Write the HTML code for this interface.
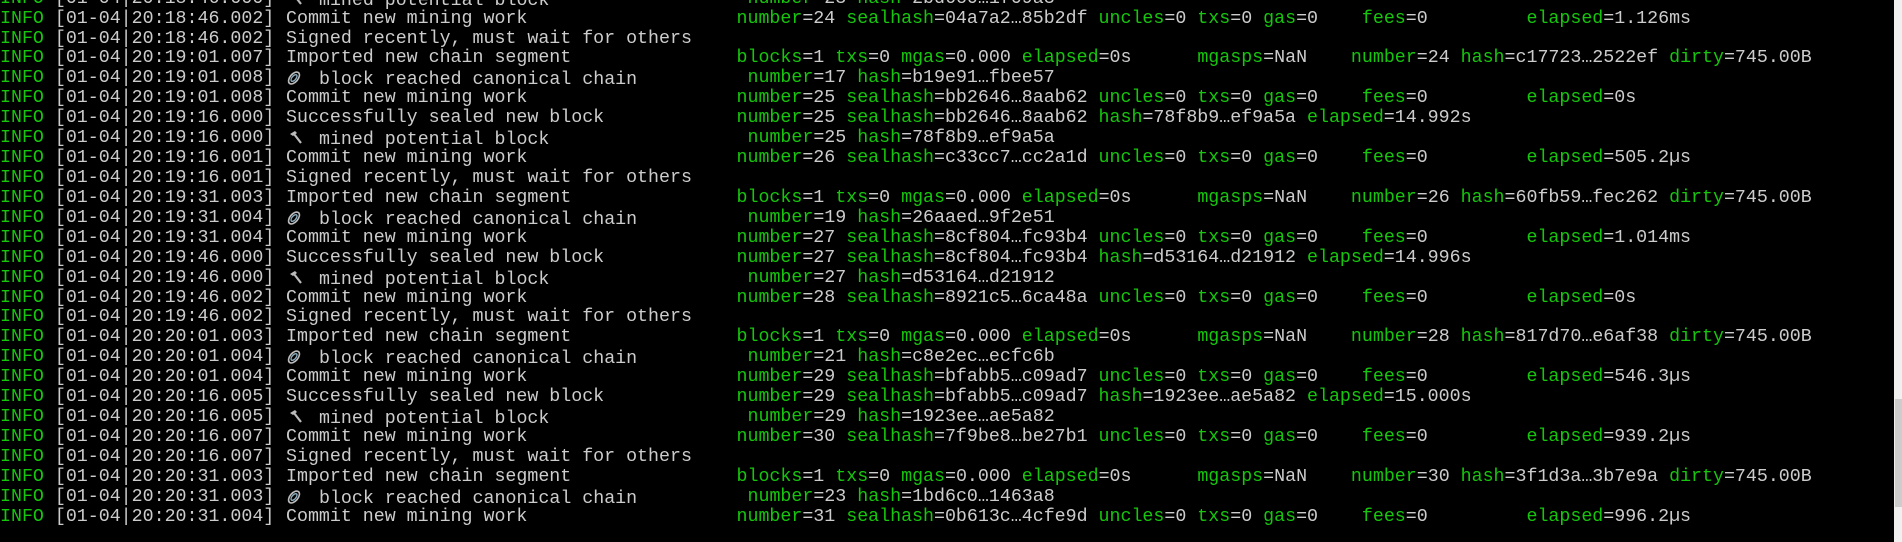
<!DOCTYPE html>
<html><head><meta charset="utf-8">
<style>
html,body{margin:0;padding:0;background:#000;width:1902px;height:542px;overflow:hidden;position:relative}
#t{position:absolute;left:0;top:-10.3px;width:1894px;height:560px;overflow:hidden;font-family:"Liberation Mono",monospace;font-size:18.3px;color:#cccccc}
.r{position:relative;height:19.93px;line-height:19.93px}
.r span{position:absolute;top:0;white-space:pre}
.p{left:0}.m{left:286px}.f{left:736.5px}.f2{left:747.5px}
b{font-weight:normal;color:#16c60c}
.ic{display:inline-block;width:22px;height:18px;vertical-align:-3px}
#sb{position:absolute;left:1894px;top:0;width:8px;height:542px;background:#f0f0f0}
#th{position:absolute;left:1895px;top:399px;width:7px;height:108px;background:#cdcdcd}
</style></head><body>
<div id="t">
<div class="r"><span class="p"><b>INFO</b> [01-04|20:18:46.000]</span><span class="m"><svg class="ic" viewBox="0 0 22 18"><path d="M4 5 L9 2 L11 4 L7 7 Z" fill="#bbb"/><path d="M8 5 L15 14" stroke="#bbb" stroke-width="2.2"/></svg> mined potential block</span><span class="f2"><b>number</b>=23 <b>hash</b>=2bd6c0…1f09a3</span></div>
<div class="r"><span class="p"><b>INFO</b> [01-04|20:18:46.002]</span><span class="m">Commit new mining work</span><span class="f"><b>number</b>=24 <b>sealhash</b>=04a7a2…85b2df <b>uncles</b>=0 <b>txs</b>=0 <b>gas</b>=0    <b>fees</b>=0         <b>elapsed</b>=1.126ms</span></div>
<div class="r"><span class="p"><b>INFO</b> [01-04|20:18:46.002]</span><span class="m">Signed recently, must wait for others</span></div>
<div class="r"><span class="p"><b>INFO</b> [01-04|20:19:01.007]</span><span class="m">Imported new chain segment</span><span class="f"><b>blocks</b>=1 <b>txs</b>=0 <b>mgas</b>=0.000 <b>elapsed</b>=0s      <b>mgasps</b>=NaN    <b>number</b>=24 <b>hash</b>=c17723…2522ef <b>dirty</b>=745.00B</span></div>
<div class="r"><span class="p"><b>INFO</b> [01-04|20:19:01.008]</span><span class="m"><svg class="ic" viewBox="0 0 22 18"><ellipse cx="8" cy="9" rx="4" ry="7" transform="rotate(40 8 9)" fill="none" stroke="#bbb" stroke-width="1.6"/><ellipse cx="8" cy="9" rx="2" ry="4" transform="rotate(40 8 9)" fill="none" stroke="#8ab" stroke-width="1.4"/></svg> block reached canonical chain</span><span class="f2"><b>number</b>=17 <b>hash</b>=b19e91…fbee57</span></div>
<div class="r"><span class="p"><b>INFO</b> [01-04|20:19:01.008]</span><span class="m">Commit new mining work</span><span class="f"><b>number</b>=25 <b>sealhash</b>=bb2646…8aab62 <b>uncles</b>=0 <b>txs</b>=0 <b>gas</b>=0    <b>fees</b>=0         <b>elapsed</b>=0s</span></div>
<div class="r"><span class="p"><b>INFO</b> [01-04|20:19:16.000]</span><span class="m">Successfully sealed new block</span><span class="f"><b>number</b>=25 <b>sealhash</b>=bb2646…8aab62 <b>hash</b>=78f8b9…ef9a5a <b>elapsed</b>=14.992s</span></div>
<div class="r"><span class="p"><b>INFO</b> [01-04|20:19:16.000]</span><span class="m"><svg class="ic" viewBox="0 0 22 18"><path d="M4 5 L9 2 L11 4 L7 7 Z" fill="#bbb"/><path d="M8 5 L15 14" stroke="#bbb" stroke-width="2.2"/></svg> mined potential block</span><span class="f2"><b>number</b>=25 <b>hash</b>=78f8b9…ef9a5a</span></div>
<div class="r"><span class="p"><b>INFO</b> [01-04|20:19:16.001]</span><span class="m">Commit new mining work</span><span class="f"><b>number</b>=26 <b>sealhash</b>=c33cc7…cc2a1d <b>uncles</b>=0 <b>txs</b>=0 <b>gas</b>=0    <b>fees</b>=0         <b>elapsed</b>=505.2µs</span></div>
<div class="r"><span class="p"><b>INFO</b> [01-04|20:19:16.001]</span><span class="m">Signed recently, must wait for others</span></div>
<div class="r"><span class="p"><b>INFO</b> [01-04|20:19:31.003]</span><span class="m">Imported new chain segment</span><span class="f"><b>blocks</b>=1 <b>txs</b>=0 <b>mgas</b>=0.000 <b>elapsed</b>=0s      <b>mgasps</b>=NaN    <b>number</b>=26 <b>hash</b>=60fb59…fec262 <b>dirty</b>=745.00B</span></div>
<div class="r"><span class="p"><b>INFO</b> [01-04|20:19:31.004]</span><span class="m"><svg class="ic" viewBox="0 0 22 18"><ellipse cx="8" cy="9" rx="4" ry="7" transform="rotate(40 8 9)" fill="none" stroke="#bbb" stroke-width="1.6"/><ellipse cx="8" cy="9" rx="2" ry="4" transform="rotate(40 8 9)" fill="none" stroke="#8ab" stroke-width="1.4"/></svg> block reached canonical chain</span><span class="f2"><b>number</b>=19 <b>hash</b>=26aaed…9f2e51</span></div>
<div class="r"><span class="p"><b>INFO</b> [01-04|20:19:31.004]</span><span class="m">Commit new mining work</span><span class="f"><b>number</b>=27 <b>sealhash</b>=8cf804…fc93b4 <b>uncles</b>=0 <b>txs</b>=0 <b>gas</b>=0    <b>fees</b>=0         <b>elapsed</b>=1.014ms</span></div>
<div class="r"><span class="p"><b>INFO</b> [01-04|20:19:46.000]</span><span class="m">Successfully sealed new block</span><span class="f"><b>number</b>=27 <b>sealhash</b>=8cf804…fc93b4 <b>hash</b>=d53164…d21912 <b>elapsed</b>=14.996s</span></div>
<div class="r"><span class="p"><b>INFO</b> [01-04|20:19:46.000]</span><span class="m"><svg class="ic" viewBox="0 0 22 18"><path d="M4 5 L9 2 L11 4 L7 7 Z" fill="#bbb"/><path d="M8 5 L15 14" stroke="#bbb" stroke-width="2.2"/></svg> mined potential block</span><span class="f2"><b>number</b>=27 <b>hash</b>=d53164…d21912</span></div>
<div class="r"><span class="p"><b>INFO</b> [01-04|20:19:46.002]</span><span class="m">Commit new mining work</span><span class="f"><b>number</b>=28 <b>sealhash</b>=8921c5…6ca48a <b>uncles</b>=0 <b>txs</b>=0 <b>gas</b>=0    <b>fees</b>=0         <b>elapsed</b>=0s</span></div>
<div class="r"><span class="p"><b>INFO</b> [01-04|20:19:46.002]</span><span class="m">Signed recently, must wait for others</span></div>
<div class="r"><span class="p"><b>INFO</b> [01-04|20:20:01.003]</span><span class="m">Imported new chain segment</span><span class="f"><b>blocks</b>=1 <b>txs</b>=0 <b>mgas</b>=0.000 <b>elapsed</b>=0s      <b>mgasps</b>=NaN    <b>number</b>=28 <b>hash</b>=817d70…e6af38 <b>dirty</b>=745.00B</span></div>
<div class="r"><span class="p"><b>INFO</b> [01-04|20:20:01.004]</span><span class="m"><svg class="ic" viewBox="0 0 22 18"><ellipse cx="8" cy="9" rx="4" ry="7" transform="rotate(40 8 9)" fill="none" stroke="#bbb" stroke-width="1.6"/><ellipse cx="8" cy="9" rx="2" ry="4" transform="rotate(40 8 9)" fill="none" stroke="#8ab" stroke-width="1.4"/></svg> block reached canonical chain</span><span class="f2"><b>number</b>=21 <b>hash</b>=c8e2ec…ecfc6b</span></div>
<div class="r"><span class="p"><b>INFO</b> [01-04|20:20:01.004]</span><span class="m">Commit new mining work</span><span class="f"><b>number</b>=29 <b>sealhash</b>=bfabb5…c09ad7 <b>uncles</b>=0 <b>txs</b>=0 <b>gas</b>=0    <b>fees</b>=0         <b>elapsed</b>=546.3µs</span></div>
<div class="r"><span class="p"><b>INFO</b> [01-04|20:20:16.005]</span><span class="m">Successfully sealed new block</span><span class="f"><b>number</b>=29 <b>sealhash</b>=bfabb5…c09ad7 <b>hash</b>=1923ee…ae5a82 <b>elapsed</b>=15.000s</span></div>
<div class="r"><span class="p"><b>INFO</b> [01-04|20:20:16.005]</span><span class="m"><svg class="ic" viewBox="0 0 22 18"><path d="M4 5 L9 2 L11 4 L7 7 Z" fill="#bbb"/><path d="M8 5 L15 14" stroke="#bbb" stroke-width="2.2"/></svg> mined potential block</span><span class="f2"><b>number</b>=29 <b>hash</b>=1923ee…ae5a82</span></div>
<div class="r"><span class="p"><b>INFO</b> [01-04|20:20:16.007]</span><span class="m">Commit new mining work</span><span class="f"><b>number</b>=30 <b>sealhash</b>=7f9be8…be27b1 <b>uncles</b>=0 <b>txs</b>=0 <b>gas</b>=0    <b>fees</b>=0         <b>elapsed</b>=939.2µs</span></div>
<div class="r"><span class="p"><b>INFO</b> [01-04|20:20:16.007]</span><span class="m">Signed recently, must wait for others</span></div>
<div class="r"><span class="p"><b>INFO</b> [01-04|20:20:31.003]</span><span class="m">Imported new chain segment</span><span class="f"><b>blocks</b>=1 <b>txs</b>=0 <b>mgas</b>=0.000 <b>elapsed</b>=0s      <b>mgasps</b>=NaN    <b>number</b>=30 <b>hash</b>=3f1d3a…3b7e9a <b>dirty</b>=745.00B</span></div>
<div class="r"><span class="p"><b>INFO</b> [01-04|20:20:31.003]</span><span class="m"><svg class="ic" viewBox="0 0 22 18"><ellipse cx="8" cy="9" rx="4" ry="7" transform="rotate(40 8 9)" fill="none" stroke="#bbb" stroke-width="1.6"/><ellipse cx="8" cy="9" rx="2" ry="4" transform="rotate(40 8 9)" fill="none" stroke="#8ab" stroke-width="1.4"/></svg> block reached canonical chain</span><span class="f2"><b>number</b>=23 <b>hash</b>=1bd6c0…1463a8</span></div>
<div class="r"><span class="p"><b>INFO</b> [01-04|20:20:31.004]</span><span class="m">Commit new mining work</span><span class="f"><b>number</b>=31 <b>sealhash</b>=0b613c…4cfe9d <b>uncles</b>=0 <b>txs</b>=0 <b>gas</b>=0    <b>fees</b>=0         <b>elapsed</b>=996.2µs</span></div>
</div>
<div id="sb"></div><div id="th"></div>
</body></html>
